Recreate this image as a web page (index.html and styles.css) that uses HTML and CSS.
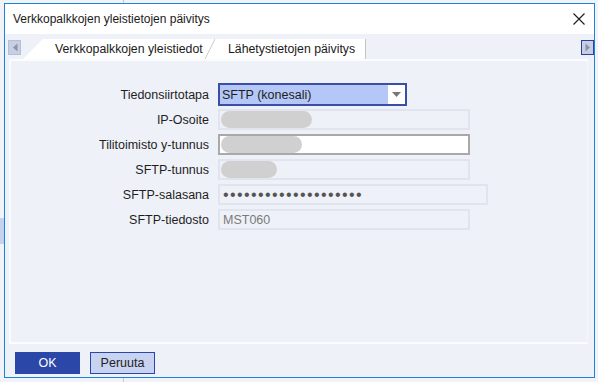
FILE: index.html
```html
<!DOCTYPE html>
<html lang="fi">
<head>
<meta charset="UTF-8">
<meta name="viewport" content="width=device-width, initial-scale=1.0">
<title>Verkkopalkkojen yleistietojen päivitys</title>
<link rel="stylesheet" href="styles.css">
</head>
<body>
<div class="behind-line top"></div>
<div class="behind-line bottom"></div>
<div class="behind-block"></div>

<div class="window">
  <div class="titlebar">
    <span class="title">Verkkopalkkojen yleistietojen päivitys</span>
    <svg class="close" width="12" height="12" viewBox="0 0 12 12">
      <path d="M0.5 0.5 L11.5 11.5 M11.5 0.5 L0.5 11.5" stroke="#1a1a1a" stroke-width="1.1" fill="none"/>
    </svg>
  </div>

  <div class="tabstrip">
    <div class="scroll-btn left">
      <svg width="6" height="9" viewBox="0 0 6 9"><path d="M5.5 0.5 L1 4.5 L5.5 8.5 Z" fill="#8d92a8"/></svg>
    </div>
    <div class="tabs">
      <div class="tab first">Verkkopalkkojen yleistiedot</div>
      <div class="tab second">Lähetystietojen päivitys</div>
    </div>
    <div class="scroll-btn right">
      <svg width="6" height="9" viewBox="0 0 6 9"><path d="M0.5 0.5 L5 4.5 L0.5 8.5 Z" fill="#8d92a8"/></svg>
    </div>
  </div>

  <div class="panel">
    <div class="form">
      <label>Tiedonsiirtotapa</label>
      <div class="select">
        <span class="select-value">SFTP (konesali)</span>
        <span class="select-arrow">
          <svg width="9" height="5" viewBox="0 0 9 5"><path d="M0 0 L9 0 L4.5 5 Z" fill="#777"/></svg>
        </span>
      </div>

      <label>IP-Osoite</label>
      <div class="field disabled"><span class="blob" style="width:91px"></span></div>

      <label>Tilitoimisto y-tunnus</label>
      <div class="field editable"><span class="blob" style="width:81px"></span></div>

      <label>SFTP-tunnus</label>
      <div class="field disabled"><span class="blob" style="width:56px"></span></div>

      <label>SFTP-salasana</label>
      <div class="field disabled wide"><span class="dots">••••••••••••••••••••</span></div>

      <label>SFTP-tiedosto</label>
      <div class="field disabled"><span class="muted">MST060</span></div>
    </div>
  </div>

  <div class="footer">
    <button class="btn primary">OK</button>
    <button class="btn secondary">Peruuta</button>
  </div>
</div>
</body>
</html>
```

FILE: styles.css
```css
body {
  margin: 0;
  padding: 3px 0 0 4px;
  background-color: #f1f3f8;
  font-family: "Liberation Sans", Arial, sans-serif;
  font-size: 12px;
  color: #1e1e1e;
}

/* app showing behind the dialog */
.behind-line {
  position: absolute;
  left: 123px;
  width: 1px;
  background-color: #c9c9c9;
}

.behind-line.top {
  top: 0;
  height: 3px;
}

.behind-line.bottom {
  top: 378px;
  height: 4px;
}

.behind-block {
  position: absolute;
  left: 0;
  top: 218px;
  width: 4px;
  height: 26px;
  background-color: #c6d1ee;
}

.window {
  position: relative;
  width: 589px;
  height: 373px;
  border: 1px solid #1b83d8;
  background-color: #eef1f8;
  display: flex;
  flex-direction: column;
}

.titlebar {
  height: 30px;
  background-color: #fff;
  display: flex;
  align-items: center;
  padding-left: 8px;
}

.title {
  font-size: 12px;
  color: #1a1a1a;
}

.close {
  margin-left: auto;
  margin-right: 9px;
}

.tabstrip {
  height: 25px;
  display: flex;
  align-items: flex-end;
  padding-left: 3px;
}

.scroll-btn {
  width: 11px;
  height: 13px;
  align-self: flex-start;
  margin-top: 6px;
  background-color: #c9cfe3;
  border: 1px solid #b7bed6;
  display: flex;
  align-items: center;
  justify-content: center;
}

.scroll-btn.right {
  margin-left: auto;
  border-color: #2c409c;
}

.tabs {
  margin-left: 2px;
  height: 20px;
  width: 342px;
  background-color: #fff;
  border-right: 1px solid #c4c4c4;
  clip-path: polygon(0 100%, 20px 0, 100% 0, 100% 100%);
  display: flex;
  align-items: center;
  font-size: 12.3px;
}

.tab {
  position: relative;
  height: 100%;
  display: flex;
  align-items: center;
  color: #1a1a1a;
}

.tab.first {
  width: 160px;
  padding-left: 32px;
}

.tab.second {
  padding-left: 13px;
}

.tab.second::before {
  content: "";
  position: absolute;
  left: -10px;
  top: 0;
  width: 10px;
  height: 100%;
  background: linear-gradient(to bottom right, transparent calc(50% - 0.8px), #c2c2c2 50%, transparent calc(50% + 0.8px));
}

.panel {
  margin-left: 4px;
  width: 576px;
  height: 281px;
  border: 2px solid #fbfcfe;
  border-right: 1px solid #f6f7fb;
  background-color: #eef1f8;
}

.form {
  display: grid;
  grid-template-columns: 198px auto;
  grid-auto-rows: 21px;
  column-gap: 9px;
  row-gap: 4px;
  padding-top: 23px;
  justify-items: start;
  align-items: center;
}

.form label {
  justify-self: end;
  font-size: 12.5px;
  color: #1e1e1e;
}

.select {
  width: 185px;
  height: 19px;
  border: 2px solid #3a4ea6;
  background-color: #b4c7f7;
  display: flex;
  align-items: center;
  font-size: 12.5px;
}

.select-value {
  padding-left: 2px;
  flex: 1;
}

.select-arrow {
  width: 17px;
  height: 100%;
  background-color: #fff;
  display: flex;
  align-items: center;
  justify-content: center;
}

.field {
  box-sizing: border-box;
  width: 252px;
  height: 21px;
  display: flex;
  align-items: center;
  padding-left: 1px;
}

.field.wide {
  width: 270px;
}

.field.disabled {
  border: 2px solid #e0e4ee;
  background-color: #eef1f8;
}

.field.editable {
  border: 2px solid #a9a9a9;
  background-color: #fff;
}

.blob {
  display: inline-block;
  height: 17px;
  border-radius: 9px;
  background-color: #d0d0d0;
}

.dots {
  padding-left: 2px;
  font-size: 16px;
  letter-spacing: 1.4px;
  color: #555;
}

.muted {
  padding-left: 2px;
  font-size: 12.5px;
  color: #7a7a7a;
}

.footer {
  flex: 1;
  display: flex;
  gap: 10px;
  padding: 8px 0 0 10px;
  align-items: flex-start;
}

.btn {
  width: 65px;
  height: 22px;
  font-family: "Liberation Sans", Arial, sans-serif;
  font-size: 12.5px;
  padding: 0;
  cursor: pointer;
}

.btn.primary {
  background-color: #2b47a7;
  border: 1px solid #2b47a7;
  color: #fff;
}

.btn.secondary {
  background-color: #c8d3f1;
  border: 1px solid #2b47a7;
  color: #222;
}
```
